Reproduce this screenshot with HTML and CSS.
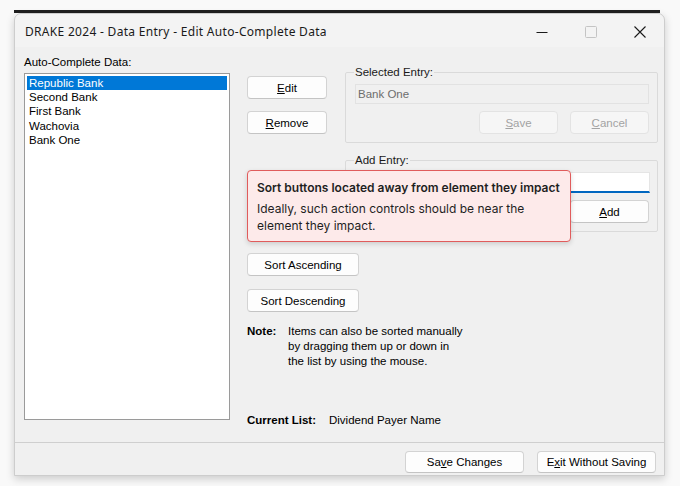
FILE: index.html
```html
<!DOCTYPE html>
<html>
<head>
<meta charset="utf-8">
<link rel="stylesheet" href="styles.css">
</head>
<body>
<div class="desk">
  <div class="behind"></div>
  <div class="window">
    <div class="titlebar">
      <span class="title">DRAKE 2024 - Data Entry - Edit Auto-Complete Data</span>
      <div class="caption">
        <span class="cap"><svg width="14" height="14" viewBox="0 0 14 14"><path d="M1.5 7.5h11" stroke="#1a1a1a" stroke-width="1"/></svg></span>
        <span class="cap"><svg width="14" height="14" viewBox="0 0 14 14"><rect x="1.5" y="1.5" width="11" height="11" rx="1" fill="none" stroke="#c4c4c4" stroke-width="1"/></svg></span>
        <span class="cap"><svg width="14" height="14" viewBox="0 0 14 14"><path d="M1.5 1.5l11 11M12.5 1.5l-11 11" stroke="#1a1a1a" stroke-width="1.1"/></svg></span>
      </div>
    </div>
    <div class="content">
      <div class="leftcol">
        <div class="label">Auto-Complete Data:</div>
        <ul class="listbox">
          <li class="sel">Republic Bank</li>
          <li>Second Bank</li>
          <li>First Bank</li>
          <li>Wachovia</li>
          <li>Bank One</li>
        </ul>
      </div>
      <div class="rightcol">
        <div class="btncol">
          <button class="btn w80"><u>E</u>dit</button>
          <button class="btn w80"><u>R</u>emove</button>
        </div>
        <fieldset class="group">
          <legend>Selected Entry:</legend>
          <div class="field disabled">Bank One</div>
          <div class="btnrow">
            <button class="btn w79 off"><u>S</u>ave</button>
            <button class="btn w79 off"><u>C</u>ancel</button>
          </div>
        </fieldset>
        <fieldset class="group add">
          <legend>Add Entry:</legend>
          <div class="field active"></div>
          <div class="btnrow">
            <button class="btn w79"><u>A</u>dd</button>
          </div>
        </fieldset>
        <div class="lower">
          <button class="btn sort first">Sort Ascending</button>
          <button class="btn sort">Sort Descending</button>
          <div class="note">
            <span class="b">Note:</span>
            <span>Items can also be sorted manually<br>by dragging them up or down in<br>the list by using the mouse.</span>
          </div>
          <div class="current"><span class="b cl">Current List:</span>Dividend Payer Name</div>
        </div>
        <div class="tip">
          <div class="tip-title">Sort buttons located away from element they impact</div>
          <div class="tip-body">Ideally, such action controls should be near the element they impact.</div>
        </div>
      </div>
    </div>
    <div class="footer">
      <button class="btn w119">Sa<u>v</u>e Changes</button>
      <button class="btn w119">E<u>x</u>it Without Saving</button>
    </div>
  </div>
</div>
</body>
</html>
```
FILE: styles.css
```css
html, body {
  margin: 0;
  padding: 0;
  background: #f9f9f9;
  width: 680px;
  height: 486px;
  overflow: hidden;
}
.desk {
  padding-top: 10px;
  padding-left: 14px;
}
.behind {
  width: 646px;
  height: 3px;
  background: #1f1f1f;
}
.window {
  width: 649px;
  height: 461px;
  border: 1px solid #cdcdcd;
  border-radius: 7px 7px 0 0;
  background: #f0f0f0;
  box-shadow: 0 3px 8px rgba(0,0,0,0.18);
  display: flex;
  flex-direction: column;
  font-family: "Liberation Sans", Arial, sans-serif;
  font-size: 11.5px;
  color: #000;
  overflow: hidden;
}
.titlebar {
  height: 33px;
  flex: none;
  background: #f3f3f3;
  border-radius: 7px 7px 0 0;
  display: flex;
  align-items: center;
  justify-content: space-between;
}
.title {
  font-family: "Noto Sans", "Open Sans", sans-serif;
  font-size: 12px;
  letter-spacing: 0.3px;
  color: #1a1a1a;
  padding-left: 10px;
  padding-top: 1px;
  white-space: nowrap;
}
.caption {
  display: flex;
  height: 33px;
  align-items: center;
}
.cap {
  width: 49px;
  display: flex;
  justify-content: center;
  align-items: center;
  padding-top: 2px;
}
.content {
  flex: 1;
  display: flex;
  gap: 17px;
  padding: 9px 6px 0 9px;
}
.leftcol {
  width: 206px;
  flex: none;
}
.label {
  line-height: 13px;
  height: 13px;
  white-space: nowrap;
}
.listbox {
  list-style: none;
  margin: 4px 0 0 0;
  padding: 2px 2px;
  height: 341px;
  border: 1px solid #9a9a9a;
  background: #fff;
}
.listbox li {
  height: 14.2px;
  line-height: 14px;
  padding-left: 2px;
  white-space: nowrap;
}
.listbox li.sel {
  background: #0078d7;
  color: #fff;
}
.rightcol {
  position: relative;
  display: grid;
  grid-template-columns: 80px 313px;
  column-gap: 18px;
  align-content: start;
  width: 411px;
}
.btncol {
  display: flex;
  flex-direction: column;
  gap: 12px;
  padding-top: 20px;
}
.btn {
  font-family: "Liberation Sans", Arial, sans-serif;
  font-size: 11.5px;
  color: #000;
  height: 23px;
  background: #fdfdfd;
  border: 1px solid #d3d3d3;
  border-bottom-color: #c4c4c4;
  border-radius: 4px;
  padding: 0;
  margin: 0;
  display: flex;
  align-items: center;
  justify-content: center;
  white-space: nowrap;
}
.btn.off {
  background: #f6f6f6;
  border-color: #e3e3e3;
  color: #a3a3a3;
}
.w80 { width: 80px; }
.w79 { width: 79px; }
.w119 { width: 119px; height: 22px; }
.group {
  margin: 10px 0 0 0;
  padding: 5px 8px 8px 9px;
  border: 1px solid #dadada;
  border-radius: 2px;
  min-width: 0;
}
.group legend {
  padding: 0 1px;
  margin-left: -1px;
  line-height: 13px;
  height: 13px;
  color: #1a1a1a;
}
.group.add {
  grid-column: 2;
  margin-top: 11px;
}
.field {
  height: 20px;
  box-sizing: border-box;
  line-height: 18px;
  padding-left: 2px;
}
.field.disabled {
  background: #f0f0f0;
  border: 1px solid #e2e2e2;
  color: #6d6d6d;
}
.field.active {
  height: 21px;
  background: #fff;
  border: 1px solid #e5e5e5;
  border-bottom: 2px solid #0067c0;
  margin-right: -1px;
}
.btnrow {
  display: flex;
  justify-content: flex-end;
  gap: 12px;
  margin-top: 7px;
}
.lower {
  grid-column: 1 / 3;
  display: flex;
  flex-direction: column;
  align-items: flex-start;
}
.sort {
  width: 112px;
  margin-top: 13px;
}
.sort.first {
  margin-top: 21px;
}
.note {
  display: grid;
  grid-template-columns: 41px auto;
  line-height: 15px;
  margin-top: 12px;
}
.b {
  font-weight: bold;
}
.current {
  margin-top: 45px;
  line-height: 13px;
  white-space: nowrap;
}
.cl {
  display: inline-block;
  width: 82px;
}
.tip {
  position: absolute;
  left: 0;
  top: 114px;
  box-sizing: content-box;
  width: 304px;
  padding: 0 9px;
  height: 70px;
  background: #fdeaea;
  border: 1px solid #e05c5c;
  border-radius: 4px;
  box-shadow: 0 2px 5px rgba(0,0,0,0.15);
  font-family: Inter, "Noto Sans", sans-serif;
  color: #1f1f1f;
}
.tip-title {
  margin-top: 9px;
  font-weight: 600;
  font-size: 12px;
  line-height: 16px;
  white-space: nowrap;
}
.tip-body {
  margin-top: 4px;
  font-size: 12px;
  line-height: 17px;
}
.footer {
  flex: none;
  border-top: 1px solid #cfcfcf;
  display: flex;
  justify-content: flex-end;
  gap: 13px;
  padding: 8px 8px 0 0;
  box-sizing: border-box;
  height: 33px;
}
```
